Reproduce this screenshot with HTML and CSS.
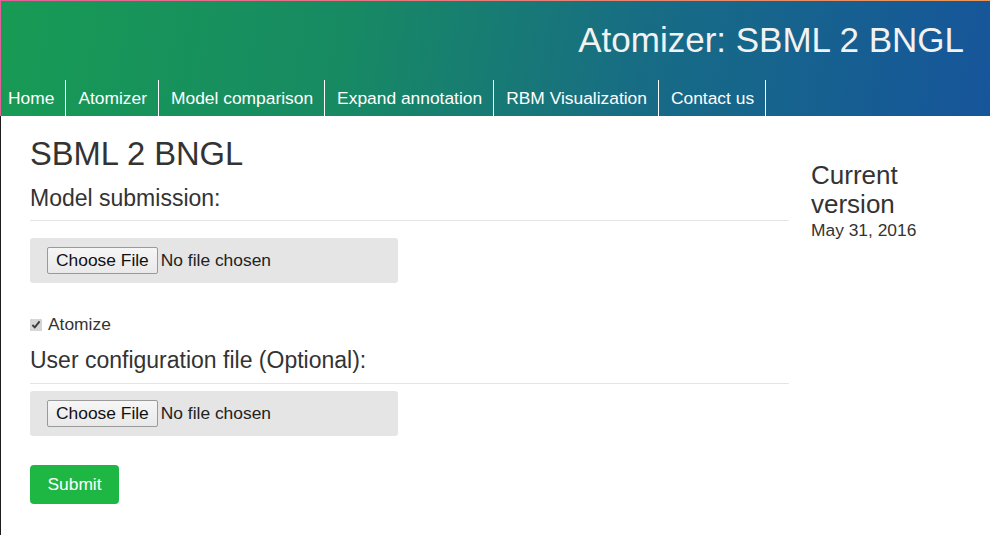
FILE: index.html
```html
<!DOCTYPE html>
<html lang="en">
<head>
<meta charset="utf-8">
<title>Atomizer: SBML 2 BNGL</title>
<link rel="stylesheet" href="styles.css">
</head>
<body>
<header class="site-header">
  <div class="brand-row">
    <h1 class="brand">Atomizer: SBML 2 BNGL</h1>
  </div>
  <nav class="main-nav">
    <a class="nav-item nav-first" href="#">Home</a>
    <a class="nav-item" href="#">Atomizer</a>
    <a class="nav-item" href="#">Model comparison</a>
    <a class="nav-item" href="#">Expand annotation</a>
    <a class="nav-item" href="#">RBM Visualization</a>
    <a class="nav-item" href="#">Contact us</a>
  </nav>
</header>
<div class="page">
  <main class="main-col">
    <h2 class="page-title">SBML 2 BNGL</h2>
    <form class="submit-form">
      <h3 class="section-title">Model submission:</h3>
      <div class="file-box file-box-first">
        <input class="file-input" type="file">
      </div>
      <label class="check-row">
        <input class="check" type="checkbox" checked>
        <span>Atomize</span>
      </label>
      <h3 class="section-title">User configuration file (Optional):</h3>
      <div class="file-box file-box-second">
        <input class="file-input" type="file">
      </div>
      <button class="submit-btn" type="button">Submit</button>
    </form>
  </main>
  <aside class="side-col">
    <h3 class="side-title">Current version</h3>
    <div class="side-date">May 31, 2016</div>
  </aside>
</div>
</body>
</html>
```

FILE: styles.css
```css
html, body {
  margin: 0;
  padding: 0;
}

body {
  font-family: "Liberation Sans", Arial, sans-serif;
  color: #333;
  background: #fff;
}

.site-header {
  height: 116px;
  background:
    linear-gradient(to right, #e3609a, #e9985a) top left / 100% 1px no-repeat,
    linear-gradient(#e3609a, #e3609a) top left / 1px 100% no-repeat,
    linear-gradient(100deg, #189b54 0%, #178a63 35%, #176c85 65%, #16559b 100%);
  color: #f4f4f4;
  display: flex;
  flex-direction: column;
}

.brand-row {
  height: 80px;
  display: flex;
  align-items: center;
  justify-content: flex-end;
  padding-right: 26px;
}

.brand {
  margin: 0;
  font-size: 35px;
  font-weight: normal;
  line-height: 1.15;
  color: #f2f2f2;
}

.main-nav {
  height: 36px;
  display: flex;
}

.nav-item {
  display: block;
  height: 36px;
  line-height: 36px;
  font-size: 17.4px;
  color: #fff;
  text-decoration: none;
  padding: 0 11px 0 12px;
  border-right: 1px solid #fff;
}

.nav-first {
  padding-left: 8px;
}

.page {
  display: flex;
  gap: 22px;
  padding-left: 30px;
  border-left: 1px solid #1c1c1c;
  min-height: calc(100vh - 116px);
  box-sizing: border-box;
}

.main-col {
  width: 759px;
  flex: none;
  margin-left: -1px;
}

.page-title {
  margin: 20px 0 0;
  font-size: 32.7px;
  font-weight: normal;
  line-height: 1.1;
}

.submit-form {
  display: flex;
  flex-direction: column;
  align-items: flex-start;
}

.section-title {
  align-self: stretch;
  margin: 14px 0 0;
  font-size: 23px;
  font-weight: normal;
  line-height: 1.1;
  padding-bottom: 9px;
  border-bottom: 1px solid #e5e5e5;
}

.file-box {
  width: 368px;
  height: 45px;
  box-sizing: border-box;
  padding: 9px 17px;
  background: #e5e5e5;
  border-radius: 3px;
  display: flex;
  align-items: center;
}

.file-box-first {
  margin-top: 17px;
}

.file-box-second {
  margin-top: 7px;
}

.file-input {
  font-family: "Liberation Sans", Arial, sans-serif;
  font-size: 17.4px;
  color: #222;
}

.file-input::file-selector-button {
  font-family: "Liberation Sans", Arial, sans-serif;
  font-size: 17.4px;
  color: #111;
  height: 27px;
  padding: 0 8px;
  margin-right: 3px;
  background: linear-gradient(#f6f6f6, #e9e9e9);
  border: 1px solid #9a9a9a;
  border-radius: 2px;
}

.check-row {
  margin-top: 31px;
  display: flex;
  align-items: center;
  font-size: 17.4px;
  line-height: 20px;
}

.check {
  width: 12px;
  height: 12px;
  margin: 1px 6px 0 0;
  accent-color: #d6d6d6;
}

.submit-btn {
  margin-top: 29px;
  width: 89px;
  height: 39px;
  background: #1fb743;
  color: #fff;
  border: none;
  border-radius: 4px;
  font-family: "Liberation Sans", Arial, sans-serif;
  font-size: 17.4px;
  padding: 0;
}

.side-col {
  width: 150px;
  flex: none;
  padding-top: 45px;
}

.side-title {
  margin: 0;
  font-size: 26px;
  font-weight: normal;
  line-height: 29px;
}

.side-date {
  font-size: 17.4px;
  line-height: 20px;
  margin-top: 1px;
}
```
